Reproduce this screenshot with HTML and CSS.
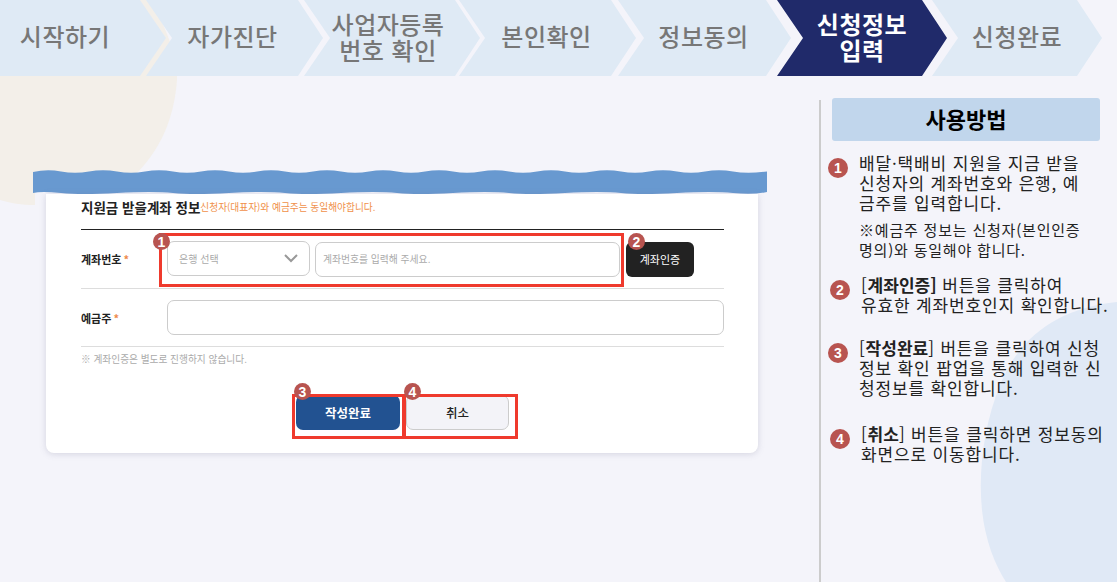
FILE: index.html
```html
<!DOCTYPE html>
<html lang="ko">
<head>
<meta charset="utf-8">
<title>신청정보 입력</title>
<link rel="stylesheet" href="styles.css">
</head>
<body>
<svg class="blobs" width="1117" height="582" viewBox="0 0 1117 582" aria-hidden="true">
  <path class="blob-beige" d="M0 0H150C168 30 178 60 177 80C174 120 160 150 135 175H35V205C22 205 10 203 0 200Z"/>
  <path class="blob-blue" d="M1117 302C1060 308 1020 335 1000 385C984 425 978 470 982 510C985 540 995 565 1006 582H1117Z"/>
</svg>
<nav class="steps">
  <div class="step step-1"><span>시작하기</span></div>
  <div class="step step-2"><span>자가진단</span></div>
  <div class="step step-3"><span>사업자등록<br>번호 확인</span></div>
  <div class="step step-4"><span>본인확인</span></div>
  <div class="step step-5"><span>정보동의</span></div>
  <div class="step step-6 active"><span>신청정보<br>입력</span></div>
  <div class="step step-7"><span>신청완료</span></div>
</nav>
<main class="content">
  <section class="shot">
    <svg class="wave" width="734" height="25" viewBox="0 0 734 25" aria-hidden="true">
      <path fill="#6899d0" d="M0 2Q14 -1 28 1.500T56 1.500T84 1.500T112 1.500T140 1.500T168 1.500T196 1.500T224 1.500T252 1.500T280 1.500T308 1.500T336 1.500T364 1.500T392 1.500T420 1.500T448 1.500T476 1.500T504 1.500T532 1.500T560 1.500T588 1.500T616 1.500T644 1.500T672 1.500T700 1.500T734 1.500V22Q720 25 700 23T644 23T588 23T532 23T476 23T420 23T364 23T308 23T252 23T196 23T140 23T84 23T28 23T0 23Z"/>
    </svg>
    <div class="card">
      <div class="card-title">
        <h2>지원금 받을계좌 정보</h2>
        <span class="title-note">신청자(대표자)와 예금주는 동일해야합니다.</span>
      </div>
      <div class="row row-account">
        <div class="label">계좌번호<i>*</i></div>
        <div class="select"><span>은행 선택</span>
          <svg width="16" height="10" viewBox="0 0 16 10" aria-hidden="true"><path d="M2 2l6 6 6-6" fill="none" stroke="#999" stroke-width="2"/></svg>
        </div>
        <div class="input input-account">계좌번호를 입력해 주세요.</div>
        <div class="btn-verify">계좌인증</div>
      </div>
      <div class="row row-holder">
        <div class="label">예금주<i>*</i></div>
        <div class="input input-holder"></div>
      </div>
      <p class="note">※ 계좌인증은 별도로 진행하지 않습니다.</p>
      <div class="actions">
        <div class="btn btn-done">작성완료</div>
        <div class="btn btn-cancel">취소</div>
      </div>
      <div class="mark mark-1"></div>
      <div class="mark mark-3"></div>
      <div class="mark mark-4"></div>
      <b class="pin pin-1">1</b>
      <b class="pin pin-2">2</b>
      <b class="pin pin-3">3</b>
      <b class="pin pin-4">4</b>
    </div>
  </section>
  <aside class="help">
    <h1>사용방법</h1>
    <div class="item item-1">
      <b class="num">1</b>
      <div>
        <p>배달·택배비 지원을 지금 받을<br>신청자의 계좌번호와 은행, 예<br>금주를 입력합니다.</p>
        <p class="sub">※예금주 정보는 신청자(본인인증<br>명의)와 동일해야 합니다.</p>
      </div>
    </div>
    <div class="item item-2">
      <b class="num">2</b>
      <p>[<strong>계좌인증]</strong> 버튼을 클릭하여<br>유효한 계좌번호인지 확인합니다.</p>
    </div>
    <div class="item item-3">
      <b class="num">3</b>
      <p>[<strong>작성완료</strong>] 버튼을 클릭하여 신청<br>정보 확인 팝업을 통해 입력한 신<br>청정보를 확인합니다.</p>
    </div>
    <div class="item item-4">
      <b class="num">4</b>
      <p>[<strong>취소</strong>] 버튼을 클릭하면 정보동의<br>화면으로 이동합니다.</p>
    </div>
  </aside>
</main>
</body>
</html>
```
FILE: styles.css
```css
* { box-sizing: border-box; }
html, body { margin: 0; padding: 0; }
body {
  position: relative;
  width: 1117px;
  height: 582px;
  overflow: hidden;
  background: #f4f4fa;
  font-family: "Noto Sans CJK KR", "Noto Sans", sans-serif;
  color: #222;
}
p, h1, h2 { margin: 0; }
.blobs { position: absolute; left: 0; top: 0; }
.blob-beige { fill: #f3efe9; }
.blob-blue { fill: #e0e9f6; }

.steps { position: relative; display: flex; height: 76px; }
.step {
  display: flex;
  align-items: center;
  justify-content: center;
  height: 76px;
  padding-bottom: 5px;
  background: #dfeaf5;
  color: #777;
  font-size: 24px;
  font-weight: 500;
  letter-spacing: .5px;
  line-height: 26px;
  text-align: center;
  white-space: nowrap;
  clip-path: polygon(0 0, calc(100% - 25px) 0, 100% 50%, calc(100% - 25px) 100%, 0 100%, 26px 50%);
}
.step-1 { width: 166px; padding-right: 36px; clip-path: polygon(0 0, 140px 0, 100% 50%, 140px 100%, 0 100%); }
.step-2 { width: 177px; margin-left: -20px; padding-right: 4px; }
.step-3 { width: 176px; margin-left: -19px; padding-right: 8px; padding-bottom: 3px; }
.step-4 { width: 177px; margin-left: -21px; padding-right: 2px; }
.step-5 { width: 173px; margin-left: -18px; padding-right: 2px; }
.step-6 { width: 170px; margin-left: -14px; padding-bottom: 3px; }
.step-7 { width: 170px; margin-left: -15px; }
.active { background: #202a6a; color: #fff; font-weight: 700; }

.content { position: relative; display: flex; height: 506px; }

.shot { width: 819px; padding: 94px 0 0 33px; }
.wave { display: block; }
.card {
  position: relative;
  width: 712px;
  height: 259px;
  margin: -1px 0 0 13px;
  padding: 0 34px 0 35px;
  background: #fff;
  border-radius: 0 0 8px 8px;
  box-shadow: 0 1px 6px rgba(120, 120, 150, .25);
}
.card-title { display: flex; align-items: center; height: 36px; border-bottom: 1px solid #222; padding-bottom: 10px; }
.card-title h2 { font-size: 13.500px; font-weight: 700; color: #222; }
.title-note { font-size: 9.700px; color: #f0904a; }
.row { display: flex; align-items: center; border-bottom: 1px solid #ddd; }
.row-account { height: 59px; }
.row-holder { height: 58px; }
.label { width: 86px; font-size: 11px; font-weight: 700; color: #222; }
.label i { margin-left: 2px; font-style: normal; color: #ee8a4c; }
.select, .input {
  height: 35px;
  background: #fff;
  border: 1px solid #ccc;
  border-radius: 7px;
  font-size: 10px;
  color: #aaa;
}
.select {
  display: flex;
  align-items: center;
  justify-content: space-between;
  width: 143px;
  margin-top: -2px;
  padding: 0 10px 0 11px;
}
.input { display: flex; align-items: center; padding: 0 7px; }
.input-account { width: 305px; margin-left: 5px; font-size: 9.800px; }
.input-holder { width: 557px; }
.btn-verify {
  display: flex;
  align-items: center;
  justify-content: center;
  width: 68px;
  height: 35px;
  margin-left: 6px;
  background: #222;
  border-radius: 6px;
  color: #fff;
  font-size: 11px;
}
.note { margin-top: 5px; font-size: 9.700px; line-height: 14px; color: #aaa; }
.actions { display: flex; gap: 6px; margin: 29px 0 0 215px; }
.btn {
  display: flex;
  align-items: center;
  justify-content: center;
  width: 103px;
  height: 35px;
  border-radius: 7px;
  font-size: 12.500px;
}
.btn-done { width: 104px; background: #225291; color: #fff; font-weight: 700; }
.btn-cancel { background: #f3f3f8; border: 1px solid #ccc; color: #222; font-weight: 500; }

.mark { position: absolute; border: 3px solid #ef3a2d; }
.mark-1 { left: 113px; top: 39px; width: 465px; height: 54px; }
.mark-3 { left: 246px; top: 200px; width: 113px; height: 45px; }
.mark-4 { left: 357px; top: 200px; width: 115px; height: 45px; }
.pin, .num {
  display: flex;
  align-items: center;
  justify-content: center;
  border-radius: 50%;
  background: #b85450;
  color: #fff;
  font-family: "Liberation Sans", sans-serif;
  font-weight: 700;
}
.pin { position: absolute; width: 17px; height: 17px; font-size: 14px; }
.pin-1 { left: 107px; top: 39px; }
.pin-2 { left: 582px; top: 39px; }
.pin-3 { left: 248px; top: 189px; }
.pin-4 { left: 358px; top: 189px; }

.help {
  width: 298px;
  height: 482px;
  margin-top: 24px;
  padding-left: 11px;
  border-left: 2px solid #ccc;
}
.help h1 {
  width: 268px;
  height: 43px;
  margin-top: -2px;
  background: #c1d6ec;
  border-radius: 3px;
  color: #000;
  font-size: 22px;
  font-weight: 700;
  line-height: 41px;
  text-align: center;
}
.item { display: flex; gap: 11px; font-size: 17px; letter-spacing: .85px; line-height: 20px; color: #222; white-space: nowrap; }
.item strong { font-weight: 700; letter-spacing: 0; }
.num { flex: none; width: 20px; height: 20px; margin-top: 5px; font-size: 14px; letter-spacing: 0; }
.sub { margin-top: 7px; font-size: 15px; letter-spacing: .8px; }
.item-1 { margin-top: 12px; margin-left: -4px; }
.item-2 { margin-top: 15px; margin-left: -2px; }
.item-3 { margin-top: 23px; margin-left: -4px; }
.item-4 { margin-top: 26px; margin-left: -2px; }
```
